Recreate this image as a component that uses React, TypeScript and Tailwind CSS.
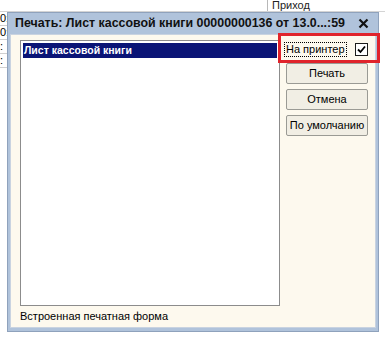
import React from 'react';

const font = { fontFamily: '"Liberation Sans", Arial, sans-serif' };

function CheckBox() {
    return (
        <span className="w-[13px] h-[13px] border border-[#1c1c1c] bg-white flex items-center justify-center">
            <svg width="9" height="9" viewBox="0 0 9 9">
                <path d="M1 4.5 L3.5 7 L8 1.5" stroke="#000" strokeWidth="1.8" fill="none" />
            </svg>
        </span>
    );
}

function Btn({ label }: { label: string }) {
    return (
        <button className="h-[21px] w-[82px] border border-[#9a9a94] rounded-[2px] bg-[#f1eee4] text-[11px] text-black leading-none whitespace-nowrap">
            {label}
        </button>
    );
}

export default function App() {
    return (
        <div className="relative w-[385px] h-[348px] bg-white overflow-hidden" style={font}>
            {/* table behind the dialog */}
            <div className="flex h-[12px] border-b border-[#d4d4d4]">
                <div className="w-[268px] border-r border-[#b8b8b8]" />
                <span className="pl-[4px] text-[11px] leading-[11px] text-[#222]">Приход</span>
            </div>
            <div className="flex flex-col w-[8px] text-[11px] leading-[13px] text-black overflow-hidden">
                <div className="h-[14px] border-b border-[#d0d0d0]">0:</div>
                <div className="h-[14px] border-b border-[#d0d0d0]">0:</div>
                <div className="h-[14px] border-b border-[#d0d0d0]">:</div>
                <div className="h-[14px] border-b border-[#d0d0d0]">:</div>
            </div>

            {/* dialog */}
            <div className="absolute left-[7px] top-[12px] w-[372px] h-[320px] bg-[#b0c3db] border border-[#8fa2bc] flex flex-col px-[2px] pb-[3px]">
                <div className="h-[21px] flex items-center justify-between pl-[5px] pr-[7px]">
                    <span className="text-[12.4px] font-bold text-[#111] whitespace-nowrap">Печать: Лист кассовой книги 00000000136 от 13.0...:59</span>
                    <svg width="11" height="11" viewBox="0 0 11 11">
                        <path d="M1.5 1.5 L9.5 9.5 M9.5 1.5 L1.5 9.5" stroke="#111" strokeWidth="2.2" />
                    </svg>
                </div>
                <div className="flex-1 bg-[#fdf9ee] border border-[#c9d3e0] flex flex-col pl-[9px] pt-[5px] pb-[4px]">
                    <div className="flex">
                        <div className="w-[260px] h-[266px] bg-white border border-[#8c8c8c] p-[2px]">
                            <div className="h-[15px] bg-[#0a1476] text-white text-[10.5px] font-bold leading-[15px] pl-[1px]">Лист кассовой книги</div>
                        </div>
                        <div className="relative flex flex-col ml-[6px] gap-[5px]">
                            <div className="absolute left-[-8px] top-[-7px] w-[102px] h-[30px] border-[3px] border-[#e0232b]" />
                            <div className="h-[18px] flex items-center justify-between w-[82px]">
                                <span className="text-[11px] text-black border border-dotted border-black leading-[13px] px-[1px] -ml-[2px] whitespace-nowrap">На принтер</span>
                                <CheckBox />
                            </div>
                            <Btn label="Печать" />
                            <Btn label="Отмена" />
                            <Btn label="По умолчанию" />
                        </div>
                    </div>
                    <div className="mt-[4px] text-[11px] text-black leading-[13px]">Встроенная печатная форма</div>
                </div>
            </div>
        </div>
    );
}
